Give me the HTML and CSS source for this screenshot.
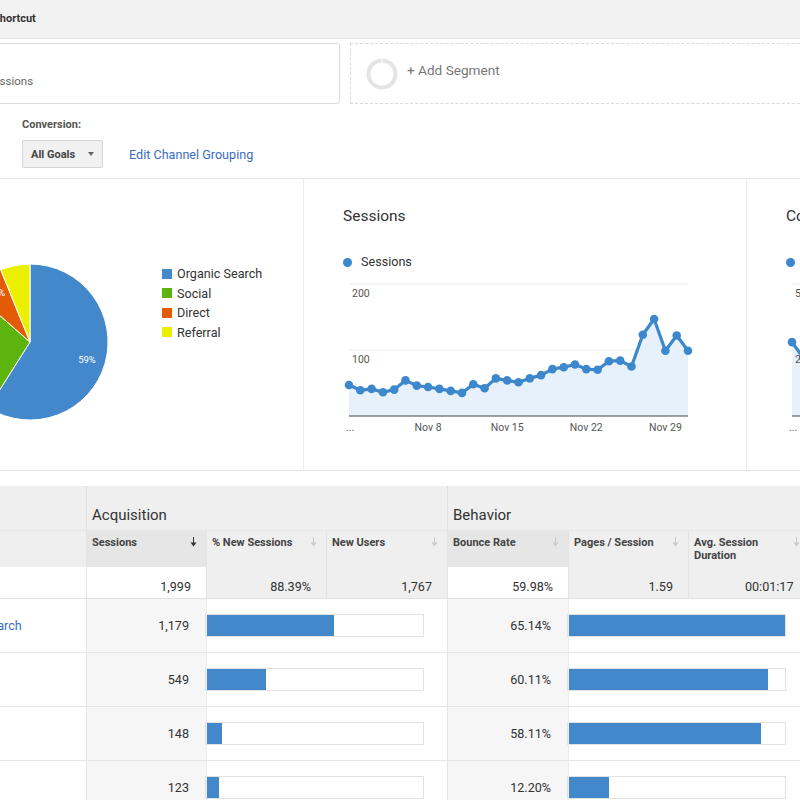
FILE: index.html
```html
<!DOCTYPE html>
<html lang="en">
<head>
    <meta charset="UTF-8">
    <meta name="viewport" content="width=device-width, initial-scale=1.0">
    <title>Channels - Acquisition</title>
    <link rel="stylesheet" href="styles.css">
</head>
<body>
<div class="page">
    <div class="toolbar">
        <span>Shortcut</span>
    </div>

    <div class="segments">
        <div class="segment">
            <div class="segment-name">All Users</div>
            <div class="segment-share">100.00% Sessions</div>
        </div>
        <div class="segment add">
            <svg class="segment-ring" width="32" height="32" viewBox="0 0 32 32">
                <circle cx="16" cy="16" r="13.5" fill="none" stroke="#e4e4e4" stroke-width="4"/>
                <line x1="16" y1="0" x2="16" y2="5" stroke="#fff" stroke-width="1.2"/>
            </svg>
            <span>+ Add Segment</span>
        </div>
    </div>

    <div class="controls">
        <div class="control-label">Conversion:</div>
        <div class="control-row">
            <div class="dropdown">All Goals <span class="caret"></span></div>
            <a href="#">Edit Channel Grouping</a>
        </div>
    </div>

    <div class="charts">
        <div class="pie-panel">
            <svg class="pie" width="160" height="160" viewBox="-80 -80 160 160">
                <path fill="#4288cb" d="M0 0V-78A78 78 0 1 1 -41.7 65.9Z"/>
                <path fill="#5cb40c" d="M0 0L-41.7 65.9A78 78 0 0 1 -58.7 -51.4Z"/>
                <path fill="#e35a07" d="M0 0L-58.7 -51.4A78 78 0 0 1 -29.3 -72.3Z"/>
                <path fill="#ebf000" d="M0 0L-29.3 -72.3A78 78 0 0 1 0 -78Z"/>
                <text x="57" y="21">59%</text>
                <text x="-50" y="10">27%</text>
                <text x="-31" y="-46">7%</text>
            </svg>
            <ul class="legend">
                <li><span class="swatch organic"></span>Organic Search</li>
                <li><span class="swatch social"></span>Social</li>
                <li><span class="swatch direct"></span>Direct</li>
                <li><span class="swatch referral"></span>Referral</li>
            </ul>
        </div>

        <div class="line-panel">
            <h2>Sessions</h2>
            <div class="series"><span class="dot"></span>Sessions</div>
            <svg class="line-chart" id="sessions-chart" width="357" height="155"></svg>
        </div>

        <div class="line-panel">
            <h2>Conversions</h2>
            <div class="series"><span class="dot"></span>Goal Completions</div>
            <svg class="line-chart" id="conversions-chart" width="357" height="155"></svg>
        </div>
    </div>

    <table class="report">
        <colgroup>
            <col class="col-dim">
            <col class="col-metric">
            <col class="col-metric">
            <col class="col-metric-wide">
            <col class="col-metric-wide">
            <col class="col-metric">
            <col class="col-metric">
        </colgroup>
        <thead>
            <tr class="group-row">
                <th></th>
                <th colspan="3">Acquisition</th>
                <th colspan="3">Behavior</th>
            </tr>
            <tr class="metric-row">
                <th><div class="th-inner"><span>Default Channel Grouping</span></div></th>
                <th class="key"><div class="th-inner"><span>Sessions</span><svg class="sort active" width="7" height="10" viewBox="0 0 7 10"><path d="M3 0h1v5.5h2.5L3.5 9.5 0.5 5.5H3z"/></svg></div></th>
                <th><div class="th-inner"><span>% New Sessions</span><svg class="sort" width="7" height="10" viewBox="0 0 7 10"><path d="M3 0h1v5.5h2.5L3.5 9.5 0.5 5.5H3z"/></svg></div></th>
                <th><div class="th-inner"><span>New Users</span><svg class="sort" width="7" height="10" viewBox="0 0 7 10"><path d="M3 0h1v5.5h2.5L3.5 9.5 0.5 5.5H3z"/></svg></div></th>
                <th class="key"><div class="th-inner"><span>Bounce Rate</span><svg class="sort" width="7" height="10" viewBox="0 0 7 10"><path d="M3 0h1v5.5h2.5L3.5 9.5 0.5 5.5H3z"/></svg></div></th>
                <th><div class="th-inner"><span>Pages / Session</span><svg class="sort" width="7" height="10" viewBox="0 0 7 10"><path d="M3 0h1v5.5h2.5L3.5 9.5 0.5 5.5H3z"/></svg></div></th>
                <th><div class="th-inner"><span>Avg. Session Duration</span><svg class="sort" width="7" height="10" viewBox="0 0 7 10"><path d="M3 0h1v5.5h2.5L3.5 9.5 0.5 5.5H3z"/></svg></div></th>
            </tr>
        </thead>
        <tbody>
            <tr class="totals">
                <td class="key"></td>
                <td class="key">1,999</td>
                <td>88.39%</td>
                <td>1,767</td>
                <td class="key">59.98%</td>
                <td>1.59</td>
                <td>00:01:17</td>
            </tr>
            <tr class="row">
                <td class="dim"><span class="num">1.</span><a href="#">Organic Search</a></td>
                <td class="value">1,179</td>
                <td class="bar-cell" colspan="2"><div class="track"><div class="fill" style="width: 58.98%"></div></div></td>
                <td class="value">65.14%</td>
                <td class="bar-cell" colspan="2"><div class="track"><div class="fill" style="width: 100%"></div></div></td>
            </tr>
            <tr class="row">
                <td class="dim"><span class="num">2.</span><a href="#">Social</a></td>
                <td class="value">549</td>
                <td class="bar-cell" colspan="2"><div class="track"><div class="fill" style="width: 27.46%"></div></div></td>
                <td class="value">60.11%</td>
                <td class="bar-cell" colspan="2"><div class="track"><div class="fill" style="width: 92.28%"></div></div></td>
            </tr>
            <tr class="row">
                <td class="dim"><span class="num">3.</span><a href="#">Direct</a></td>
                <td class="value">148</td>
                <td class="bar-cell" colspan="2"><div class="track"><div class="fill" style="width: 7.40%"></div></div></td>
                <td class="value">58.11%</td>
                <td class="bar-cell" colspan="2"><div class="track"><div class="fill" style="width: 89.21%"></div></div></td>
            </tr>
            <tr class="row">
                <td class="dim"><span class="num">4.</span><a href="#">Referral</a></td>
                <td class="value">123</td>
                <td class="bar-cell" colspan="2"><div class="track"><div class="fill" style="width: 6.15%"></div></div></td>
                <td class="value">12.20%</td>
                <td class="bar-cell" colspan="2"><div class="track"><div class="fill" style="width: 18.73%"></div></div></td>
            </tr>
        </tbody>
    </table>
</div>

<script>
    // Daily values, Nov 1 - Dec 1
    const sessions = [47, 39, 41, 36, 40, 54, 46, 44, 41, 38, 35, 48, 42, 57, 54, 51,
                      57, 62, 71, 74, 78, 71, 70, 83, 84, 75, 123, 147, 99, 122, 99];
    const conversions = [28, 22, 18, 16, 20, 25, 19, 17, 21, 15, 14, 22, 18, 24, 26, 20,
                         23, 27, 25, 29, 31, 26, 24, 30, 33, 27, 38, 41, 30, 35, 29];
    const ticks = { 7: 'Nov 8', 14: 'Nov 15', 21: 'Nov 22', 28: 'Nov 29' };

    // Area + line + dots, top gridline = max value
    function drawLineChart(id, values, max) {
        const svg = document.getElementById(id);
        const left = 6, right = 345, base = 136;
        const scale = (base - 4) / max;
        const step = (right - left) / (values.length - 1);
        const points = values.map((v, i) => [left + i * step, base - v * scale]);
        const line = points.map(p => p[0].toFixed(1) + ',' + p[1].toFixed(1)).join(' ');
        const mid = base - (max / 2) * scale;

        let html = '';
        html += `<line class="grid" x1="${left}" x2="${right}" y1="4" y2="4"/>`;
        html += `<line class="grid" x1="${left}" x2="${right}" y1="${mid}" y2="${mid}"/>`;
        html += `<polygon class="area" points="${left},${base} ${line} ${right},${base}"/>`;
        html += `<line class="axis" x1="${left}" x2="${right}" y1="${base}" y2="${base}"/>`;
        html += `<polyline class="trend" points="${line}"/>`;
        points.forEach(p => {
            html += `<circle class="point" cx="${p[0].toFixed(1)}" cy="${p[1].toFixed(1)}" r="4.3"/>`;
        });
        html += `<text x="9" y="17">${max}</text>`;
        html += `<text x="9" y="${mid + 13}">${max / 2}</text>`;
        html += `<text x="3" y="151">...</text>`;
        Object.keys(ticks).forEach(i => {
            html += `<text class="tick" x="${(left + i * step).toFixed(1)}" y="151">${ticks[i]}</text>`;
        });
        svg.innerHTML = html;
    }

    drawLineChart('sessions-chart', sessions, 200);
    drawLineChart('conversions-chart', conversions, 50);
</script>
</body>
</html>
```

FILE: styles.css
```css
* {
    margin: 0;
    padding: 0;
    box-sizing: border-box;
}

body {
    font-family: Roboto, "Noto Sans", Arial, sans-serif;
    color: #333;
    background: #fff;
    overflow: hidden;
}

.page {
    width: 1400px;
    margin-left: -150px;
}

/* top toolbar */
.toolbar {
    height: 39px;
    background: #f2f2f2;
    border-bottom: 1px solid #e2e2e2;
    padding-left: 143px;
    font-size: 11px;
    font-weight: bold;
    line-height: 38px;
    color: #333;
}

/* segments */
.segments {
    display: flex;
    gap: 10px;
    padding: 4px 0 0 69px;
}

.segment {
    width: 421px;
    height: 61px;
    border: 1px solid #dcdcdc;
    border-radius: 3px;
    padding: 11px 20px;
}

.segment-name {
    font-size: 13px;
    font-weight: bold;
    line-height: 18px;
    color: #333;
}

.segment-share {
    font-size: 11.5px;
    line-height: 16px;
    color: #666;
}

.segment.add {
    width: 480px;
    border: 1px dashed #d9d9d9;
    border-radius: 0;
    display: flex;
    align-items: center;
    gap: 9px;
    padding: 0 15px;
    font-size: 13.6px;
    color: #777;
}

.segment.add span {
    margin-bottom: 8px;
}

/* conversion picker */
.controls {
    padding: 14px 0 10px 172px;
    border-bottom: 1px solid #e5e5e5;
}

.control-label {
    font-size: 11px;
    font-weight: bold;
    line-height: 14px;
    color: #555;
}

.control-row {
    display: flex;
    align-items: center;
    margin-top: 8px;
}

.dropdown {
    width: 81px;
    height: 28px;
    display: flex;
    align-items: center;
    justify-content: space-between;
    padding: 0 8px;
    background: #f1f1f1;
    border: 1px solid #d5d5d5;
    border-radius: 2px;
    font-size: 11px;
    font-weight: bold;
    color: #444;
}

.caret {
    border-left: 3.5px solid transparent;
    border-right: 3.5px solid transparent;
    border-top: 4px solid #666;
}

.control-row a {
    margin-left: 26px;
    font-size: 12.6px;
    color: #3a6cc8;
    text-decoration: none;
}

/* charts */
.charts {
    display: flex;
    height: 292px;
    border-bottom: 1px solid #e6e6e6;
}

.pie-panel {
    width: 453px;
    flex: none;
    display: flex;
    align-items: flex-start;
    gap: 52px;
    padding: 83px 0 0 100px;
}

.pie path {
    stroke: #fff;
    stroke-width: 1;
    stroke-linejoin: round;
}

.pie text {
    font-size: 9.5px;
    fill: #fff;
    text-anchor: middle;
}

.legend {
    list-style: none;
    margin-top: 2px;
    font-size: 12.6px;
    line-height: 19.5px;
    color: #333;
}

.legend li {
    display: flex;
    align-items: center;
    gap: 5px;
}

.swatch {
    width: 10px;
    height: 10px;
}

.swatch.organic { background: #4288cb; }
.swatch.social { background: #5cb40c; }
.swatch.direct { background: #e35a07; }
.swatch.referral { background: #ebf000; }

.line-panel {
    width: 443px;
    flex: none;
    border-left: 1px solid #ececec;
    padding: 27px 0 0 39px;
}

.line-panel h2 {
    font-size: 15.5px;
    font-weight: normal;
    line-height: 20px;
    color: #333;
}

.series {
    display: flex;
    align-items: center;
    margin-top: 28px;
    font-size: 12.6px;
    line-height: 16px;
    color: #333;
}

.dot {
    width: 9px;
    height: 9px;
    border-radius: 50%;
    background: #3d87cc;
    margin-right: 9px;
}

.line-chart {
    display: block;
    margin-top: 10px;
}

.line-chart .grid {
    stroke: #ececec;
    stroke-width: 1;
}

.line-chart .area {
    fill: #e6f1fb;
}

.line-chart .axis {
    stroke: #444;
    stroke-width: 1.2;
}

.line-chart .trend {
    fill: none;
    stroke: #3d87cc;
    stroke-width: 3.2;
    stroke-linejoin: round;
}

.line-chart .point {
    fill: #3d87cc;
}

.line-chart text {
    font-size: 10.5px;
    fill: #555;
}

.line-chart .tick {
    text-anchor: middle;
}

/* data table */
.report {
    margin-top: 15px;
    border-collapse: collapse;
    table-layout: fixed;
    width: 958px;
    font-size: 12.6px;
    color: #333;
}

.col-dim { width: 236px; }
.col-metric { width: 120px; }
.col-metric-wide { width: 121px; }

.group-row th {
    height: 44px;
    background: #efefef;
    font-size: 15px;
    font-weight: normal;
    color: #333;
    text-align: left;
    vertical-align: bottom;
    padding: 0 0 6px 5px;
    border-left: 1px solid #e0e0e0;
}

.metric-row th {
    height: 37px;
    background: #efefef;
    vertical-align: top;
    text-align: left;
    padding: 5px 9px 0 5px;
    border-left: 1px solid #e4e4e4;
    border-top: 1px solid #e6e6e6;
}

.metric-row th.key {
    background: #e6e6e6;
}

.th-inner {
    display: flex;
    justify-content: space-between;
    align-items: flex-start;
    gap: 8px;
    font-size: 11px;
    font-weight: bold;
    line-height: 13px;
    color: #444;
}

.sort {
    flex: none;
    margin-top: 1px;
    fill: #c9c9c9;
}

.sort.active {
    fill: #333;
}

.totals td {
    height: 31px;
    background: #efefef;
    text-align: right;
    vertical-align: bottom;
    padding: 0 15px 4px 0;
    border-left: 1px solid #e4e4e4;
    border-bottom: 1px solid #e2e2e2;
}

.totals td.key {
    background: #fff;
}

.row td {
    height: 54px;
    border-bottom: 1px solid #e6e6e6;
}

.row .dim {
    padding-left: 50px;
    white-space: nowrap;
}

.num {
    display: inline-block;
    width: 36px;
    color: #555;
}

.row .dim a {
    color: #3a6cc8;
    text-decoration: none;
}

.row .value {
    background: #f6f6f6;
    text-align: right;
    padding-right: 17px;
    border-left: 1px solid #e6e6e6;
    border-right: 1px solid #ececec;
}

.bar-cell {
    padding-right: 23px;
}

/* track sits flush against the value column */
.track {
    height: 23px;
    margin-left: -2px;
    border: 1px solid #e2e2e2;
    background: #fff;
}

.fill {
    height: 100%;
    background: #4288cb;
}
```
